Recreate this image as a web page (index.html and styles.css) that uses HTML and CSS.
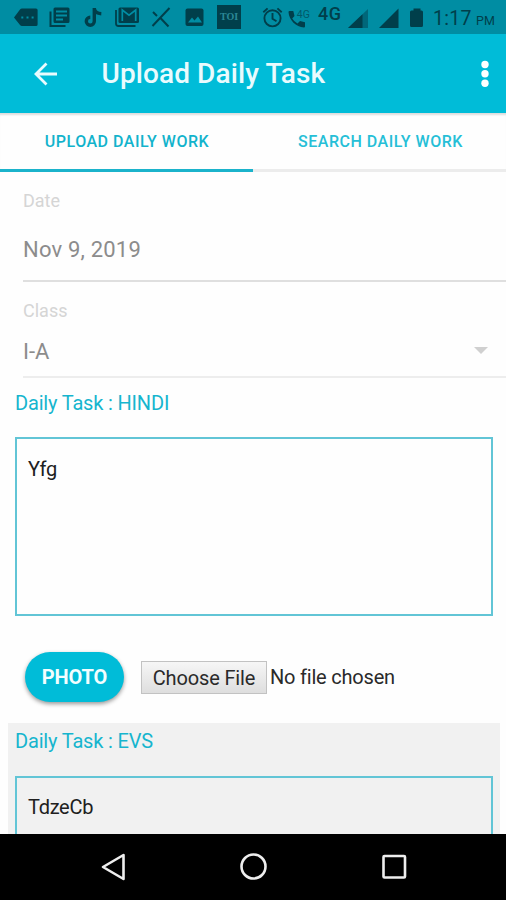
FILE: index.html
```html
<!DOCTYPE html>
<html lang="en">
<head>
<meta charset="utf-8">
<title>Upload Daily Task</title>
<link rel="stylesheet" href="styles.css">
</head>
<body>
<div class="screen">
  <div class="status">
    <svg width="32" height="34" viewBox="12 0 32 34"><path fill="#003f4b" fill-rule="evenodd" d="M14 17.500l6-8q.8-1 2-1h14q1.600 0 1.600 1.600v14.400q0 1.500-1.600 1.500h-14q-1.200 0-2-1zM21.300 16.500v2h2v-2zM26.500 16.500v2h2v-2zM31.600 16.500v2h2v-2z"/></svg>
    <svg width="34" height="34" viewBox="44 0 34 34"><path fill="#003f4b" fill-rule="evenodd" d="M55 7.500h13q1.500 0 1.500 1.500v12.500q0 1.500-1.500 1.500h-13q-1.500 0-1.500-1.500v-12.500q0-1.500 1.500-1.500zM56 10.500v2h11v-2zM56 14.500v2h11v-2zM56 18.500v2h7v-2z"/><path d="M50.500 11.500v14.500h15" fill="none" stroke="#003f4b" stroke-width="2"/></svg>
    <svg width="32" height="34" viewBox="78 0 32 34"><path d="M94.300 8v13.300a4 4 0 1 1-4-4M94.300 8.500q1 5 7 5.300" fill="none" stroke="#003f4b" stroke-width="3.400"/></svg>
    <svg width="38" height="34" viewBox="110 0 38 34"><path d="M116 10v13.500q0 2.500 2.500 2.500h17" fill="none" stroke="#003f4b" stroke-width="1.800"/><rect x="118.500" y="7.500" width="20.500" height="15.500" rx="1.500" fill="#003f4b"/><path d="M122.300 21v-11l6.700 5.200 6.700-5.200v11" fill="none" stroke="#008da3" stroke-width="1.700"/></svg>
    <svg width="32" height="34" viewBox="148 0 32 34"><path d="M153 12l4 4M160 17.500l8.500 9M169.500 8l-17 18" fill="none" stroke="#003f4b" stroke-width="2"/></svg>
    <svg width="32" height="34" viewBox="180 0 32 34"><rect x="185.500" y="8.500" width="18" height="17.500" rx="2" fill="#003f4b"/><path fill="#008da3" d="M188 22.500l4-5 2.500 3 3.500-4 4 6z"/></svg>
    <span class="toi">TOI</span>
    <svg width="44" height="34" viewBox="241 0 44 34"><g fill="none" stroke="#003f4b" stroke-width="1.900"><circle cx="272.500" cy="18.300" r="8.100"/><path d="M272.500 13v5.700l4 2.500M263.300 12.200l4.300-3.800M281.700 12.200l-4.300-3.800"/></g></svg>
    <svg class="call" width="30" height="34" viewBox="285 0 30 34"><path fill="#003f4b" d="M289.500 11h3.800l1.200 5-2.300 2.400q2 3.200 5.300 5l2.500-2.300 5 1.200v4.200q0 1-1 1c-8-.2-15-7.500-15.500-15.500q0-1 1-1z"/><text x="296.800" y="17.500">4G</text></svg>
    <span class="net">4G</span>
    <svg width="60" height="34" viewBox="343 0 60 34"><path fill="#00677a" d="M348 28l20-19v19z"/><path fill="#003f4b" d="M348 28l14.500-13.800v13.800zM379 28l19.500-19.500v19.500z"/></svg>
    <svg width="30" height="34" viewBox="403 0 30 34"><path fill="#003f4b" d="M410 12q0-1.500 1.500-1.500h2v-2h7v2h1q1.500 0 1.500 1.500v13.500q0 1.500-1.500 1.500h-10q-1.500 0-1.500-1.500z"/></svg>
    <span class="clock">1:17 <small>PM</small></span>
  </div>
  <header class="bar">
    <svg class="back" width="24" height="24" viewBox="0 0 24 24"><path d="M23 12H2.500M12.500 1.500L2 12l10.500 10.500" fill="none" stroke="#e9fbfe" stroke-width="2.800"/></svg>
    <h1>Upload Daily Task</h1>
    <svg class="more" width="8" height="28" viewBox="0 0 8 28"><g fill="#fff"><circle cx="4" cy="4.500" r="3.700"/><circle cx="4" cy="13.800" r="3.700"/><circle cx="4" cy="23.200" r="3.700"/></g></svg>
  </header>
  <nav class="tabs">
    <a class="tab active"><span>UPLOAD DAILY WORK</span></a>
    <a class="tab"><span>SEARCH DAILY WORK</span></a>
  </nav>
  <main>
    <div class="field date"><label>Date</label><div class="value">Nov 9, 2019</div></div>
    <div class="field class"><label>Class</label><div class="value">I-A <i class="caret"></i></div></div>
    <section class="task">
      <h2>Daily Task : HINDI</h2>
      <div class="box">Yfg</div>
      <div class="upload">
        <div class="photo">PHOTO</div>
        <div class="choose">Choose File</div>
        <span class="none">No file chosen</span>
      </div>
    </section>
    <section class="task alt">
      <h2>Daily Task : EVS</h2>
      <div class="box">TdzeCb</div>
    </section>
  </main>
  <footer class="nav">
    <svg width="506" height="66" viewBox="0 834 506 66"><g fill="none" stroke="#eee" stroke-width="2.600"><path stroke-linejoin="round" d="M103 867l20.500-12v24z"/><circle cx="253.500" cy="866.500" r="12"/><rect x="383.500" y="856" width="21.500" height="21.500" rx="1"/></g></svg>
  </footer>
</div>
</body>
</html>
```
FILE: styles.css
```css
* { box-sizing: border-box; }
body { margin: 0; font-family: Roboto, sans-serif; background: #fff; }
svg { display: block; flex: none; }
.screen { width: 506px; height: 900px; display: flex; flex-direction: column; overflow: hidden; background: #fefefe; }
.status { flex: none; height: 34px; padding-left: 12px; display: flex; background: #008da3; color: #003f4b; white-space: nowrap; }
.toi { width: 24px; height: 24px; margin: 5px 0 0 5px; background: #003f4b; color: #2b8795; font: bold 10px/24px "Liberation Serif", serif; text-align: center; }
.call text { font: 10.5px Roboto, sans-serif; fill: #00596a; }
.net { width: 28px; padding-left: 3px; font-size: 18px; font-weight: 500; line-height: 27px; letter-spacing: .5px; }
.clock { font-size: 19.500px; line-height: 38px; letter-spacing: .3px; }
.clock small { font-size: 12.500px; letter-spacing: .3px; margin-left: -1px; }
.bar { flex: none; height: 79px; display: flex; align-items: center; padding: 0 17px 0 34px; background: #00bcd8; color: #e9fbfe; }
.bar h1 { flex: 1; margin: 0 0 0 43.5px; font-size: 28px; line-height: 34px; font-weight: 500; letter-spacing: .1px; white-space: nowrap; }
.tabs { flex: none; height: 59px; display: flex; box-shadow: inset 0 3px 2px -1px #ddd; }
.tab { width: 253px; padding-top: 1px; display: flex; align-items: center; justify-content: center; border-bottom: 3px solid #ececec; color: #26bfd7; font-size: 16px; font-weight: 500; letter-spacing: .5px; white-space: nowrap; }
.tab:last-child { padding-left: 2px; }
.tab.active { padding-left: 1px; color: #12b3cc; border-color: #1bb3cb; }
main { flex: 1; min-height: 0; overflow: hidden; }
.field { margin-left: 23px; color: #8c8c8c; font-size: 22px; }
.field label { display: block; color: #d5d5d5; font-size: 18px; line-height: 22px; }
.date { height: 110px; padding-top: 18px; border-bottom: 2px solid #dfdfdf; }
.date .value { margin-top: 24px; line-height: 28px; letter-spacing: .2px; }
.class { height: 96px; padding-top: 18px; border-bottom: 2px solid #ededed; }
.class .value { margin-top: 16px; padding-right: 18px; line-height: 28px; display: flex; align-items: center; justify-content: space-between; }
.caret { border: 7px solid transparent; border-top: 7px solid #d0d0d0; border-bottom: 0; margin-top: -3px; }
.task { height: 345px; margin: 0 6px 0 8px; padding: 12px 7px 0; }
.task h2 { margin: 0; color: #16b5ce; font-size: 20px; line-height: 26px; font-weight: 400; letter-spacing: -.17px; }
.box { width: 478px; height: 179px; margin-top: 21px; padding: 17px 11px; border: 2px solid #62c5d6; color: #202020; font-size: 20px; line-height: 26px; letter-spacing: -.3px; }
.upload { display: flex; align-items: center; height: 52px; margin-top: 35px; padding-left: 10px; font-size: 20px; color: #2a2a2a; white-space: nowrap; }
.photo { width: 99px; height: 50px; border-radius: 25px; background: #00bcd8; box-shadow: 0 2px 4px rgba(0,0,0,.4); color: #f2feff; font-weight: 700; line-height: 50px; letter-spacing: -.1px; text-align: center; }
.choose { width: 126px; height: 33px; margin-left: 17px; border: 1px solid #c2c2c2; background: linear-gradient(#f6f6f6, #dedede); line-height: 32px; letter-spacing: -.15px; text-align: center; }
.none { margin-left: 3px; letter-spacing: -.2px; }
.alt { margin-top: 0; padding-top: 5px; background: #f1f1f1; }
.alt .box { margin-top: 22px; padding-top: 16px; }
.nav { flex: none; height: 66px; background: #000; }
```
